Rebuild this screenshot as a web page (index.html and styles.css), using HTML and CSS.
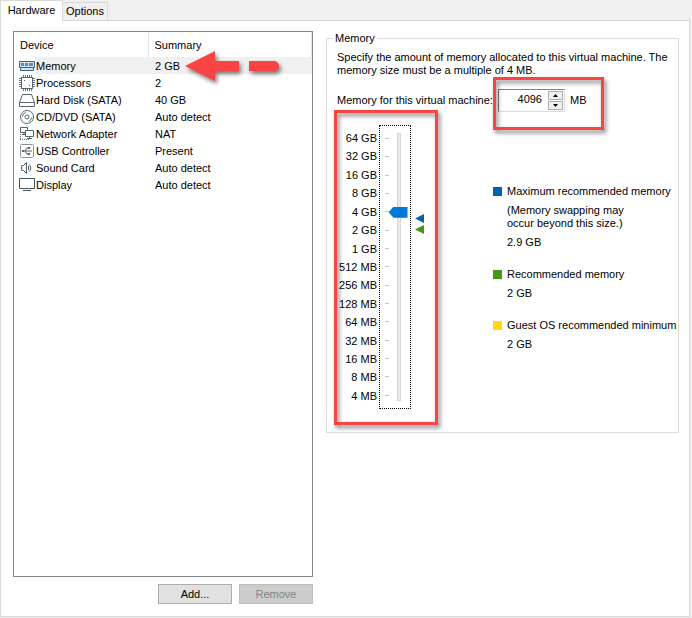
FILE: index.html
```html
<!DOCTYPE html>
<html lang="en">
<head>
    <meta charset="UTF-8">
    <meta name="viewport" content="width=device-width, initial-scale=1.0">
    <title>Virtual Machine Settings</title>
    <link rel="stylesheet" href="styles.css">
</head>
<body>
    <!-- Tabs -->
    <div class="tabs" role="tablist">
        <button class="tab active" role="tab" aria-selected="true">Hardware</button>
        <button class="tab" role="tab" aria-selected="false">Options</button>
    </div>

    <main class="panel">
        <!-- Device list -->
        <section class="devices">
            <div class="device-box">
                <table class="device-table">
                    <colgroup>
                        <col class="col-icon">
                        <col class="col-name">
                        <col>
                    </colgroup>
                    <thead>
                        <tr>
                            <th colspan="2">Device</th>
                            <th>Summary</th>
                        </tr>
                    </thead>
                    <tbody>
                        <tr class="selected">
                            <td class="icon-cell"><svg class="icon" viewBox="0 0 16 16"><path d="M.5 3.500h15v6h-1v3h-13v-3h-1z" fill="#d3e3ef" stroke="#35658c"/><path d="M2 5h3v3H2zM6 5h3v3H6zM10 5h4v3h-4z" fill="#5f8db3"/><path d="M1 9.500h14" stroke="#35658c"/></svg></td>
                            <td>Memory</td>
                            <td>2 GB</td>
                        </tr>
                        <tr>
                            <td class="icon-cell"><svg class="icon" viewBox="0 0 16 16"><path d="M4.500 0v16M6.500 0v16M8.500 0v16M10.500 0v16M12.500 0v16M0 3.500h16M0 5.500h16M0 7.500h16M0 9.500h16M0 11.500h16" stroke="#6b7780"/><rect x="2.500" y="2.500" width="11" height="11" fill="#fff" stroke="#56646e"/><path d="M5 5h1v1H5zM10 10h1v1h-1z" fill="#56646e"/></svg></td>
                            <td>Processors</td>
                            <td>2</td>
                        </tr>
                        <tr>
                            <td class="icon-cell"><svg class="icon" viewBox="0 0 16 16"><path d="M3.500 2.500h9l3 8v4H.5v-4zM.5 10.500h15" fill="#fff" stroke="#56646e"/></svg></td>
                            <td>Hard Disk (SATA)</td>
                            <td>40 GB</td>
                        </tr>
                        <tr>
                            <td class="icon-cell"><svg class="icon" viewBox="0 0 16 16"><g fill="none" stroke="#56646e"><circle cx="8" cy="8" r="6.500"/><circle cx="8" cy="8" r="2"/><path d="M3.500 7.500a4.500 4.500 0 0 1 3-4M12.500 8.500a4.500 4.500 0 0 1-3 4"/></g></svg></td>
                            <td>CD/DVD (SATA)</td>
                            <td>Auto detect</td>
                        </tr>
                        <tr>
                            <td class="icon-cell"><svg class="icon" viewBox="0 0 16 16"><g fill="none" stroke="#56646e"><path d="M1.500 1.500h7v5h-7zM5 6.500v2M3 8.500h3"/><path d="M6.500 4.500h8v6h-8z" fill="#fff"/><path d="M10.500 10.500v2M8 12.500h5"/><path d="M1.500 8v6M1 13.500h10" stroke-dasharray="1 1"/></g></svg></td>
                            <td>Network Adapter</td>
                            <td>NAT</td>
                        </tr>
                        <tr>
                            <td class="icon-cell"><svg class="icon" viewBox="0 0 16 16"><rect x="1.500" y="1.500" width="13" height="13" rx="1" fill="#fff" stroke="#89949c"/><path d="M3 7h2v2H3zM9 4h2v2H9zM9 10h2v2H9z" fill="#56646e"/><path d="M5 8h8M6 8l2-3h1M6 8l2 3h1" fill="none" stroke="#56646e"/></svg></td>
                            <td>USB Controller</td>
                            <td>Present</td>
                        </tr>
                        <tr>
                            <td class="icon-cell"><svg class="icon" viewBox="0 0 16 16"><g fill="none" stroke="#56646e"><path d="M2.500 5.500h2l3-3v11l-3-3h-2z"/><path d="M9.500 6v4M10.500 4.500q3 3.500 0 7"/></g></svg></td>
                            <td>Sound Card</td>
                            <td>Auto detect</td>
                        </tr>
                        <tr>
                            <td class="icon-cell"><svg class="icon" viewBox="0 0 16 16"><path d="M.5 1.500h15v10H.5zM4 13.500h8" fill="#fff" stroke="#44525c"/></svg></td>
                            <td>Display</td>
                            <td>Auto detect</td>
                        </tr>
                    </tbody>
                </table>
                <svg class="arrow" viewBox="0 0 96 30" aria-hidden="true"><path d="M0 15L30 0v10h24v10H30v10zM64 10h25a5 5 0 0 1 0 10H64z" fill="#fa4444"/></svg>
            </div>
            <div class="actions">
                <button class="btn">Add...</button>
                <button class="btn" disabled>Remove</button>
            </div>
        </section>

        <!-- Memory settings -->
        <fieldset class="memory">
            <legend>Memory</legend>
            <p class="hint">Specify the amount of memory allocated to this virtual machine. The memory size must be a multiple of 4 MB.</p>

            <div class="amount">
                <label for="memorySize">Memory for this virtual machine:</label>
                <div class="amount-field marked">
                    <div class="spinner">
                        <input type="text" id="memorySize" value="4096">
                        <div class="spin-buttons">
                            <button class="spin" aria-label="Increase"><svg viewBox="0 0 5 3"><path d="M0 3h5L2.500 0z"/></svg></button>
                            <button class="spin" aria-label="Decrease"><svg viewBox="0 0 5 3"><path d="M0 0h5L2.500 3z"/></svg></button>
                        </div>
                    </div>
                    <span>MB</span>
                </div>
            </div>

            <div class="scale-row">
                <div class="scale marked">
                    <ol class="scale-labels">
                        <li>64 GB</li>
                        <li>32 GB</li>
                        <li>16 GB</li>
                        <li>8 GB</li>
                        <li>4 GB</li>
                        <li>2 GB</li>
                        <li>1 GB</li>
                        <li>512 MB</li>
                        <li>256 MB</li>
                        <li>128 MB</li>
                        <li>64 MB</li>
                        <li>32 MB</li>
                        <li>16 MB</li>
                        <li>8 MB</li>
                        <li>4 MB</li>
                    </ol>
                    <div class="slider">
                        <div class="ticks">
                            <i></i><i></i><i></i><i></i><i></i><i></i><i></i><i></i><i></i><i></i><i></i><i></i><i></i><i></i><i></i>
                        </div>
                        <input type="range" class="range" min="0" max="14" value="10" aria-label="Memory size">
                    </div>
                    <div class="markers">
                        <span class="marker blue"></span>
                        <span class="marker green"></span>
                    </div>
                </div>

                <dl class="legend">
                    <dt class="max">Maximum recommended memory</dt>
                    <dd>(Memory swapping may<br>occur beyond this size.)</dd>
                    <dd>2.9 GB</dd>
                    <dt class="recommended">Recommended memory</dt>
                    <dd>2 GB</dd>
                    <dt class="minimum">Guest OS recommended minimum</dt>
                    <dd>2 GB</dd>
                </dl>
            </div>
        </fieldset>
    </main>
</body>
</html>
```
FILE: styles.css
```css
/* General Styles */
* {
    box-sizing: border-box;
}

body {
    display: flex;
    flex-direction: column;
    min-height: 100vh;
    margin: 0;
    background: #f0f0f0;
    color: #000;
    font-family: Tahoma, "Liberation Sans", sans-serif;
    font-size: 11px;
    line-height: 13px;
}

button,
input {
    margin: 0;
    padding: 0;
    color: inherit;
    font: inherit;
}

/* Tabs */
.tabs {
    display: flex;
    align-items: flex-end;
    height: 21px;
}

.tab {
    width: 45px;
    height: 18px;
    margin-bottom: 1px;
    background: #f0f0f0;
    border: 1px solid #d9d9d9;
    border-left: 0;
    border-bottom: 0;
}

.tab.active {
    z-index: 1;
    width: 63px;
    height: 21px;
    margin-bottom: 0;
    padding-bottom: 1px;
    background: #fff;
    border-left: 1px solid #d9d9d9;
}

/* Panel */
.panel {
    display: grid;
    grid-template-columns: 300px 1fr;
    flex: 1;
    gap: 13px;
    margin: -1px 2px 1px 0;
    padding: 10px 10px 12px 12px;
    background: #fff;
    border: 1px solid #d9d9d9;
}

/* Device list */
.devices {
    display: flex;
    flex-direction: column;
}

.device-box {
    position: relative;
    flex: 1;
    border: 1px solid #828790;
}

.device-table {
    width: 100%;
    border-collapse: collapse;
    table-layout: fixed;
}

.col-icon {
    width: 21px;
}

.col-name {
    width: 113px;
}

.device-table th {
    height: 25px;
    padding: 1px 6px 0;
    border-right: 1px solid #e5e5e5;
    font-weight: normal;
    text-align: left;
}

.device-table td {
    height: 17px;
    padding: 1px 0 0 1px;
    white-space: nowrap;
}

.device-table td:last-child {
    padding-left: 7px;
}

.device-table .icon-cell {
    padding: 0 0 0 5px;
}

.selected td:not(.icon-cell) {
    background: #f0f0f0;
}

.icon {
    display: block;
    width: 16px;
    height: 16px;
}

.arrow {
    position: absolute;
    top: 19px;
    left: 171px;
    width: 96px;
    height: 30px;
    overflow: visible;
    filter: drop-shadow(2px 3px 2px rgba(0, 0, 0, 0.5));
}

.actions {
    display: flex;
    justify-content: flex-end;
    gap: 7px;
    margin-top: 7px;
}

.btn {
    width: 74px;
    height: 20px;
    background: #e1e1e1;
    border: 1px solid #adadad;
}

.btn:disabled {
    background: #ccc;
    border-color: #bfbfbf;
    color: #838383;
}

/* Memory settings */
.memory {
    align-self: start;
    min-width: 0;
    margin: 1px 0 0;
    padding: 6px 10px 23px;
    border: 1px solid #dcdcdc;
}

.memory legend {
    margin-left: -4px;
    padding: 0 2px;
}

.hint {
    margin: 0;
}

.amount {
    display: flex;
    align-items: center;
    gap: 5px;
    margin-top: 12px;
}

.amount label {
    width: 156px;
    white-space: nowrap;
}

.amount-field {
    display: flex;
    align-items: center;
    gap: 5px;
    width: 93px;
}

.spinner {
    display: flex;
    width: 67px;
    height: 23px;
    padding: 1px;
    border: 1px solid #828282;
    border-right-color: #dcdcdc;
    border-bottom-color: #dcdcdc;
}

.spinner input {
    flex: 1;
    width: 0;
    padding: 0 6px 2px 0;
    border: 0;
    outline: none;
    background: none;
    text-align: right;
}

.spin-buttons {
    display: flex;
    flex-direction: column;
    gap: 1px;
}

.spin {
    display: flex;
    flex: 1;
    align-items: center;
    justify-content: center;
    width: 15px;
    background: #f0f0f0;
    border: 1px solid #adadad;
}

.spin svg {
    width: 5px;
    height: 3px;
}

/* Red highlight frames */
.marked {
    position: relative;
}

.marked::after {
    content: "";
    position: absolute;
    inset: -12px -13px -18px -5px;
    border: 3px solid #fa4444;
    filter: drop-shadow(2px 3px 2px rgba(0, 0, 0, 0.5));
    pointer-events: none;
}

.scale.marked::after {
    inset: -15px -14px -16px -3px;
}

/* Slider */
.scale-row {
    display: flex;
    justify-content: space-between;
    margin-top: 13px;
}

.scale {
    display: flex;
    height: 284px;
}

.scale-labels {
    display: flex;
    flex-direction: column;
    justify-content: space-between;
    width: 40px;
    margin: 0;
    padding: 7px 0 6px;
    list-style: none;
    text-align: right;
    white-space: nowrap;
}

.slider {
    display: flex;
    width: 32px;
    margin-left: 2px;
    padding: 7px 0 7px 5px;
    border: 1px dotted #000;
}

.ticks {
    display: flex;
    flex-direction: column;
    justify-content: space-between;
    padding: 5px 0;
}

.ticks i {
    width: 4px;
    height: 1px;
    background: #c4c4c4;
}

.range {
    appearance: none;
    width: 19px;
    height: 268px;
    background: none;
    outline: none;
    writing-mode: vertical-lr;
    direction: rtl;
}

.range::-webkit-slider-runnable-track {
    width: 4px;
    background: #e7eaea;
    border: 1px solid #d6d6d6;
}

.range::-webkit-slider-thumb {
    appearance: none;
    width: 19px;
    height: 11px;
    margin-left: -9px;
    background: #0078d7;
    clip-path: polygon(0 50%, 5px 0, 100% 0, 100% 100%, 5px 100%);
}

.markers {
    display: flex;
    flex-direction: column;
    gap: 2px;
    margin-left: 4px;
    padding-top: 89px;
}

.marker {
    width: 9px;
    height: 9px;
    clip-path: polygon(0 50%, 100% 0, 100% 100%);
}

.blue {
    background: #0063b1;
}

.green {
    background: #459612;
}

/* Legend */
.legend {
    width: 175px;
    margin: 60px 0 0;
    white-space: nowrap;
}

.legend dt {
    display: flex;
    align-items: center;
    gap: 5px;
}

.legend dt::before {
    content: "";
    flex-shrink: 0;
    width: 9px;
    height: 9px;
}

.legend .max::before {
    background: #0063b1;
}

.legend .recommended::before {
    background: #459612;
}

.legend .minimum::before {
    background: #ffda0f;
}

.legend dd {
    margin: 6px 0 0 14px;
}

.legend dd + dt {
    margin-top: 19px;
}
```
